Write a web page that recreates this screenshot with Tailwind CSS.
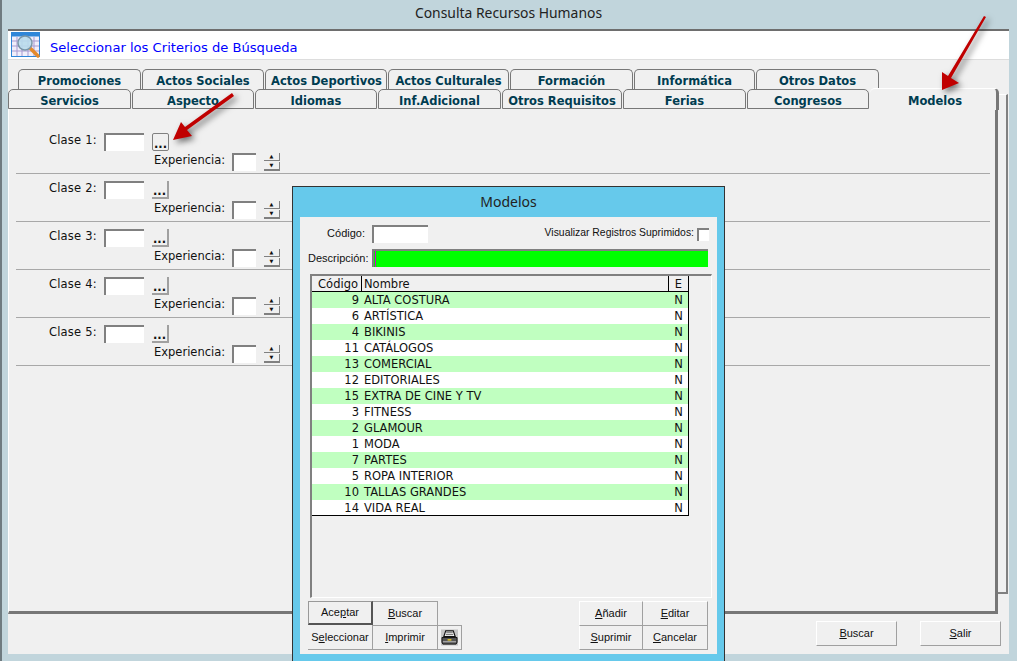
<!DOCTYPE html>
<html lang="es">
<head>
<meta charset="utf-8">
<script src="https://cdn.jsdelivr.net/npm/@tailwindcss/browser@4"></script>
<title>Consulta Recursos Humanos</title>
</head>
<body class="m-0">
<div class="relative w-[1017px] h-[661px] overflow-hidden bg-[#c1d5dc] border-l-2 border-[#6f7b80] font-['DejaVu_Sans',sans-serif] text-[11.5px] text-[#111]">
  <div class="h-[29px] -ml-[2px] pb-[2px] flex items-center justify-center font-['Noto_Sans',sans-serif] text-[13.9px] text-[#222]">Consulta Recursos Humanos</div>

  <!-- main window -->
  <div class="ml-[6px] w-[1001px] h-[625px] bg-[#f0f0f0] border-t-2 border-[#6e6e6e] flex flex-col">
    <div class="h-[29px] bg-white border-b border-[#dddddd] flex items-center shrink-0">
      <svg class="ml-[3px] w-[31px] h-[28px]" viewBox="0 0 31 28">
        <rect x="0.5" y="1.5" width="28" height="24" fill="#f0eefa" stroke="#2f86d8"/>
        <rect x="0.5" y="1.5" width="28" height="4" fill="#2f86d8"/>
        <path d="M1 10h27M1 15h27M1 20h27M6 6v19M11 6v19M17 6v19M23 6v19" stroke="#a79ad0" stroke-width="1" fill="none"/>
        <path d="M19 17l8 8" stroke="#e58a2c" stroke-width="3.5" stroke-linecap="round"/>
        <circle cx="14" cy="12" r="7" fill="#b9dcec" fill-opacity="0.9" stroke="#7a96a8" stroke-width="1.5"/>
      </svg>
      <span class="ml-[8px] mt-[6px] text-[13.1px] text-[#0000ff]">Seleccionar los Criterios de Búsqueda</span>
    </div>

    <div class="relative flex-1 flex flex-col">
      <!-- tabs -->
      <div class="pt-[9px] font-bold text-[#003c50]">
        <div class="flex h-[20px] ml-[10px] gap-[1px]">
          <div class="w-[123px] pt-[4px] flex items-center justify-center rounded-t-[5px] border-t border-x border-[#777]">Promociones</div>
          <div class="w-[122px] pt-[4px] flex items-center justify-center rounded-t-[5px] border-t border-x border-[#777]">Actos Sociales</div>
          <div class="w-[122px] pt-[4px] pl-[1px] flex items-center justify-center rounded-t-[5px] border-t border-x border-[#777]">Actos Deportivos</div>
          <div class="w-[121px] pt-[4px] flex items-center justify-center rounded-t-[5px] border-t border-x border-[#777]">Actos Culturales</div>
          <div class="w-[123px] pt-[4px] flex items-center justify-center rounded-t-[5px] border-t border-x border-[#777]">Formación</div>
          <div class="w-[121px] pt-[4px] flex items-center justify-center rounded-t-[5px] border-t border-x border-[#777]">Informática</div>
          <div class="w-[123px] pt-[4px] flex items-center justify-center rounded-t-[5px] border-t border-x border-[#777]">Otros Datos</div>
        </div>
        <div class="flex h-[20px] gap-[1px]">
          <div class="w-[123px] pt-[5px] flex items-center justify-center rounded-t-[5px] border-t border-x border-b border-[#777]">Servicios</div>
          <div class="w-[122px] pt-[5px] flex items-center justify-center rounded-t-[5px] border-t border-x border-b border-[#777]">Aspecto</div>
          <div class="w-[122px] pt-[5px] flex items-center justify-center rounded-t-[5px] border-t border-x border-b border-[#777]">Idiomas</div>
          <div class="w-[123px] pt-[5px] flex items-center justify-center rounded-t-[5px] border-t border-x border-b border-[#777]">Inf.Adicional</div>
          <div class="w-[120px] pt-[5px] flex items-center justify-center rounded-t-[5px] border-t border-x border-b border-[#777]">Otros Requisitos</div>
          <div class="w-[123px] pt-[5px] flex items-center justify-center rounded-t-[5px] border-t border-x border-b border-[#777]">Ferias</div>
          <div class="w-[122px] pt-[5px] flex items-center justify-center rounded-t-[5px] border-t border-x border-b border-[#777]">Congresos</div>
          <div class="relative z-10 w-[129px] h-[22px] -mt-[1px] pt-[5px] pl-[4px] flex items-center justify-center rounded-t-[5px] bg-[#f0f0f0] border-t border-white border-r-[3px] border-r-[#777]">Modelos</div>
        </div>
      </div>

      <div class="flex h-[505px] shrink-0">
        <!-- panel -->
        <div class="w-[990px] h-[505px] border-b-[3px] border-r-[3px] border-[#777] border-l border-l-white pl-[7px] pr-[5px] pt-[17px]">
          <div class="h-[48px] border-b border-[#a8a8a8] pt-[7px]">
            <div class="flex items-start h-[20px]">
              <span class="ml-[33px] w-[55px] leading-[14px] tracking-[0.2px]">Clase 1:</span>
              <div class="w-[40px] h-[18px] bg-white border-t-2 border-l-2 border-[#808080]"></div>
              <div class="ml-[8px] w-[17px] h-[18px] flex items-end justify-center pb-[1px] leading-[10px] font-bold bg-[#f0f0f0] border border-[#808080] rounded-[2px]">...</div>
            </div>
            <div class="flex items-start h-[20px]">
              <span class="ml-[138px] w-[78px] leading-[14px]">Experiencia:</span>
              <div class="w-[24px] h-[18px] bg-white border-t-2 border-l-2 border-[#808080]"></div>
              <div class="ml-[8px] w-[16px] h-[18px] flex flex-col gap-[1px]">
                <div class="h-[8px] flex items-center justify-center text-[5px] leading-none border-b border-r border-[#808080] bg-[#f0f0f0]">▲</div>
                <div class="h-[9px] flex items-center justify-center text-[5px] leading-none border-b-2 border-r border-[#808080] bg-[#f0f0f0]">▼</div>
              </div>
            </div>
          </div>
          <div class="h-[48px] border-b border-[#a8a8a8] pt-[7px]">
            <div class="flex items-start h-[20px]">
              <span class="ml-[33px] w-[55px] leading-[14px] tracking-[0.2px]">Clase 2:</span>
              <div class="w-[40px] h-[18px] bg-white border-t-2 border-l-2 border-[#808080]"></div>
              <div class="ml-[8px] w-[17px] h-[18px] flex items-end justify-center pb-[1px] leading-[10px] font-bold bg-[#f0f0f0] border-b-2 border-r-2 border-[#a0a0a0]">...</div>
            </div>
            <div class="flex items-start h-[20px]">
              <span class="ml-[138px] w-[78px] leading-[14px]">Experiencia:</span>
              <div class="w-[24px] h-[18px] bg-white border-t-2 border-l-2 border-[#808080]"></div>
              <div class="ml-[8px] w-[16px] h-[18px] flex flex-col gap-[1px]">
                <div class="h-[8px] flex items-center justify-center text-[5px] leading-none border-b border-r border-[#808080] bg-[#f0f0f0]">▲</div>
                <div class="h-[9px] flex items-center justify-center text-[5px] leading-none border-b-2 border-r border-[#808080] bg-[#f0f0f0]">▼</div>
              </div>
            </div>
          </div>
          <div class="h-[48px] border-b border-[#a8a8a8] pt-[7px]">
            <div class="flex items-start h-[20px]">
              <span class="ml-[33px] w-[55px] leading-[14px] tracking-[0.2px]">Clase 3:</span>
              <div class="w-[40px] h-[18px] bg-white border-t-2 border-l-2 border-[#808080]"></div>
              <div class="ml-[8px] w-[17px] h-[18px] flex items-end justify-center pb-[1px] leading-[10px] font-bold bg-[#f0f0f0] border-b-2 border-r-2 border-[#a0a0a0]">...</div>
            </div>
            <div class="flex items-start h-[20px]">
              <span class="ml-[138px] w-[78px] leading-[14px]">Experiencia:</span>
              <div class="w-[24px] h-[18px] bg-white border-t-2 border-l-2 border-[#808080]"></div>
              <div class="ml-[8px] w-[16px] h-[18px] flex flex-col gap-[1px]">
                <div class="h-[8px] flex items-center justify-center text-[5px] leading-none border-b border-r border-[#808080] bg-[#f0f0f0]">▲</div>
                <div class="h-[9px] flex items-center justify-center text-[5px] leading-none border-b-2 border-r border-[#808080] bg-[#f0f0f0]">▼</div>
              </div>
            </div>
          </div>
          <div class="h-[48px] border-b border-[#a8a8a8] pt-[7px]">
            <div class="flex items-start h-[20px]">
              <span class="ml-[33px] w-[55px] leading-[14px] tracking-[0.2px]">Clase 4:</span>
              <div class="w-[40px] h-[18px] bg-white border-t-2 border-l-2 border-[#808080]"></div>
              <div class="ml-[8px] w-[17px] h-[18px] flex items-end justify-center pb-[1px] leading-[10px] font-bold bg-[#f0f0f0] border-b-2 border-r-2 border-[#a0a0a0]">...</div>
            </div>
            <div class="flex items-start h-[20px]">
              <span class="ml-[138px] w-[78px] leading-[14px]">Experiencia:</span>
              <div class="w-[24px] h-[18px] bg-white border-t-2 border-l-2 border-[#808080]"></div>
              <div class="ml-[8px] w-[16px] h-[18px] flex flex-col gap-[1px]">
                <div class="h-[8px] flex items-center justify-center text-[5px] leading-none border-b border-r border-[#808080] bg-[#f0f0f0]">▲</div>
                <div class="h-[9px] flex items-center justify-center text-[5px] leading-none border-b-2 border-r border-[#808080] bg-[#f0f0f0]">▼</div>
              </div>
            </div>
          </div>
          <div class="h-[48px] border-b border-[#a8a8a8] pt-[7px]">
            <div class="flex items-start h-[20px]">
              <span class="ml-[33px] w-[55px] leading-[14px] tracking-[0.2px]">Clase 5:</span>
              <div class="w-[40px] h-[18px] bg-white border-t-2 border-l-2 border-[#808080]"></div>
              <div class="ml-[8px] w-[17px] h-[18px] flex items-end justify-center pb-[1px] leading-[10px] font-bold bg-[#f0f0f0] border-b-2 border-r-2 border-[#a0a0a0]">...</div>
            </div>
            <div class="flex items-start h-[20px]">
              <span class="ml-[138px] w-[78px] leading-[14px]">Experiencia:</span>
              <div class="w-[24px] h-[18px] bg-white border-t-2 border-l-2 border-[#808080]"></div>
              <div class="ml-[8px] w-[16px] h-[18px] flex flex-col gap-[1px]">
                <div class="h-[8px] flex items-center justify-center text-[5px] leading-none border-b border-r border-[#808080] bg-[#f0f0f0]">▲</div>
                <div class="h-[9px] flex items-center justify-center text-[5px] leading-none border-b-2 border-r border-[#808080] bg-[#f0f0f0]">▼</div>
              </div>
            </div>
          </div>
        </div>
        <div class="w-[10px] h-[500px] -mt-[15px] border-t border-white border-r-2 border-b-2 border-r-[#808080] border-b-[#808080]"></div>
      </div>

      <!-- footer buttons -->
      <div class="flex justify-end pt-[7px] pr-[8px] gap-[23px] font-['Liberation_Sans',sans-serif] text-[11px]">
        <div class="w-[81px] h-[25px] flex items-center justify-center border-t border-l border-white border-r border-b border-r-[#a0a0a0] border-b-[#a0a0a0]"><span><u>B</u>uscar</span></div>
        <div class="w-[81px] h-[25px] flex items-center justify-center border-t border-l border-white border-r border-b border-r-[#a0a0a0] border-b-[#a0a0a0]"><span><u>S</u>alir</span></div>
      </div>
    </div>
  </div>

  <!-- modal -->
  <div class="absolute z-20 left-[290px] top-[186px] w-[433px] h-[480px] bg-[#66c9eb] border border-[#333] font-['Liberation_Sans',sans-serif] text-[11px]">
    <div class="h-[30px] pb-[2px] flex items-center justify-center font-['Noto_Sans',sans-serif] text-[14px] text-[#222]">Modelos</div>
    <div class="mx-[7px] h-[437px] bg-[#f0f0f0] flex flex-col pt-[8px] px-[8px]">
      <div class="flex items-center h-[18px]">
        <span class="w-[57px] text-right pb-[2px]">Código:</span>
        <div class="ml-[7px] w-[56px] h-[18px] bg-white border-t-2 border-l-2 border-[#808080]"></div>
        <span class="ml-auto mr-[3px] pb-[2px] text-[10.4px]">Visualizar Registros Suprimidos:</span>
        <div class="w-[12px] h-[13px] bg-white border-t-2 border-l-2 border-[#808080]"></div>
      </div>
      <div class="flex items-center h-[18px] mt-[6px]">
        <span class="w-[57px] text-right whitespace-nowrap">Descripción:</span>
        <div class="ml-[7px] w-[336px] h-[18px] bg-[#00ff00] border-t-2 border-l-2 border-[#808080] flex items-stretch pl-[1px]"><div class="w-[1px] bg-[#d000d0]"></div></div>
      </div>
      <div class="mt-[7px] ml-[2px] w-[402px] h-[324px] border-t-2 border-l-2 border-[#808080] border-r border-b border-r-white border-b-white font-['DejaVu_Sans',sans-serif] text-[11.5px]">
        <div class="w-[377px] h-[240px] border-r border-b border-black">
          <div class="flex h-[16px] border-b border-black leading-[16px] text-[#111]">
            <div class="w-[50px] text-right pr-[3px] border-r border-black">Código</div>
            <div class="w-[307px] pl-[2px] border-r border-black">Nombre</div>
            <div class="flex-1 text-center">E</div>
          </div>
          <div class="flex h-[16px] leading-[17px] bg-[#c0ffc0]"><div class="w-[50px] text-right pr-[3px]">9</div><div class="w-[307px] pl-[2px]">ALTA COSTURA</div><div class="flex-1 text-center">N</div></div>
          <div class="flex h-[16px] leading-[17px] bg-white"><div class="w-[50px] text-right pr-[3px]">6</div><div class="w-[307px] pl-[2px]">ARTÍSTICA</div><div class="flex-1 text-center">N</div></div>
          <div class="flex h-[16px] leading-[17px] bg-[#c0ffc0]"><div class="w-[50px] text-right pr-[3px]">4</div><div class="w-[307px] pl-[2px]">BIKINIS</div><div class="flex-1 text-center">N</div></div>
          <div class="flex h-[16px] leading-[17px] bg-white"><div class="w-[50px] text-right pr-[3px]">11</div><div class="w-[307px] pl-[2px]">CATÁLOGOS</div><div class="flex-1 text-center">N</div></div>
          <div class="flex h-[16px] leading-[17px] bg-[#c0ffc0]"><div class="w-[50px] text-right pr-[3px]">13</div><div class="w-[307px] pl-[2px]">COMERCIAL</div><div class="flex-1 text-center">N</div></div>
          <div class="flex h-[16px] leading-[17px] bg-white"><div class="w-[50px] text-right pr-[3px]">12</div><div class="w-[307px] pl-[2px]">EDITORIALES</div><div class="flex-1 text-center">N</div></div>
          <div class="flex h-[16px] leading-[17px] bg-[#c0ffc0]"><div class="w-[50px] text-right pr-[3px]">15</div><div class="w-[307px] pl-[2px]">EXTRA DE CINE Y TV</div><div class="flex-1 text-center">N</div></div>
          <div class="flex h-[16px] leading-[17px] bg-white"><div class="w-[50px] text-right pr-[3px]">3</div><div class="w-[307px] pl-[2px]">FITNESS</div><div class="flex-1 text-center">N</div></div>
          <div class="flex h-[16px] leading-[17px] bg-[#c0ffc0]"><div class="w-[50px] text-right pr-[3px]">2</div><div class="w-[307px] pl-[2px]">GLAMOUR</div><div class="flex-1 text-center">N</div></div>
          <div class="flex h-[16px] leading-[17px] bg-white"><div class="w-[50px] text-right pr-[3px]">1</div><div class="w-[307px] pl-[2px]">MODA</div><div class="flex-1 text-center">N</div></div>
          <div class="flex h-[16px] leading-[17px] bg-[#c0ffc0]"><div class="w-[50px] text-right pr-[3px]">7</div><div class="w-[307px] pl-[2px]">PARTES</div><div class="flex-1 text-center">N</div></div>
          <div class="flex h-[16px] leading-[17px] bg-white"><div class="w-[50px] text-right pr-[3px]">5</div><div class="w-[307px] pl-[2px]">ROPA INTERIOR</div><div class="flex-1 text-center">N</div></div>
          <div class="flex h-[16px] leading-[17px] bg-[#c0ffc0]"><div class="w-[50px] text-right pr-[3px]">10</div><div class="w-[307px] pl-[2px]">TALLAS GRANDES</div><div class="flex-1 text-center">N</div></div>
          <div class="flex h-[15px] leading-[17px] bg-white"><div class="w-[50px] text-right pr-[3px]">14</div><div class="w-[307px] pl-[2px]">VIDA REAL</div><div class="flex-1 text-center">N</div></div>
        </div>
      </div>
      <div class="mt-[3px] flex">
        <div class="grid grid-cols-[65px_65px] grid-rows-[24px_25px]">
          <div class="flex items-center justify-center border border-[#555] border-l-[#999] border-t-[#999] border-b-2 border-r-2"><span>Ace<u>p</u>tar</span></div>
          <div class="flex items-center justify-center border-t border-r border-[#a0a0a0]"><span><u>B</u>uscar</span></div>
          <div class="flex items-center justify-center border-b border-r border-[#a0a0a0]"><span>S<u>e</u>leccionar</span></div>
          <div class="flex items-center justify-center border-t border-b border-r border-[#a0a0a0]"><span><u>I</u>mprimir</span></div>
        </div>
        <div class="self-end w-[24px] h-[25px] flex items-center justify-center border-t border-r border-b border-[#a0a0a0]">
          <svg class="w-[17px] h-[17px]" viewBox="0 0 18 17">
            <rect x="0" y="0" width="18" height="17" fill="#c4c4c4"/>
            <path d="M5 1.5h8l2 6H3z" fill="#fff" stroke="#111" stroke-width="1.2"/>
            <path d="M5.5 3.5h7M5 5.5h8" stroke="#333" stroke-width="0.8"/>
            <path d="M1 8.5h16v5l-1 2H2l-1-2z" fill="#555" stroke="#111"/>
            <path d="M7 11h4" stroke="#f0d020" stroke-width="1.5"/>
            <path d="M2 13h14" stroke="#ddd" stroke-width="0.8"/>
          </svg>
        </div>
        <div class="ml-auto mr-[1px] grid grid-cols-[64px_65px] grid-rows-[24px_25px]">
          <div class="flex items-center justify-center border-t border-l border-r border-[#a0a0a0] border-t-white border-l-white"><span><u>A</u>ñadir</span></div>
          <div class="flex items-center justify-center border-t border-r border-[#a0a0a0] border-t-white"><span><u>E</u>ditar</span></div>
          <div class="flex items-center justify-center border-t border-b border-r border-l border-[#a0a0a0] border-l-white"><span><u>S</u>uprimir</span></div>
          <div class="flex items-center justify-center border-t border-b border-r border-[#a0a0a0]"><span><u>C</u>ancelar</span></div>
        </div>
      </div>
    </div>
  </div>

  <!-- annotation arrows -->
  <svg class="absolute z-30 left-[-2px] top-0 w-[1017px] h-[661px] pointer-events-none drop-shadow-[3px_3px_3px_rgba(0,0,0,0.55)]" viewBox="0 0 1017 661" fill="#c00000">
    <path d="M232 93L234 96L187 130L192 136L173 140L181 122L185 127Z"/>
    <path d="M984 16L986 17L951 78L959 83L942 90L942 72L948 76Z"/>
  </svg>
</div>
</body>
</html>
